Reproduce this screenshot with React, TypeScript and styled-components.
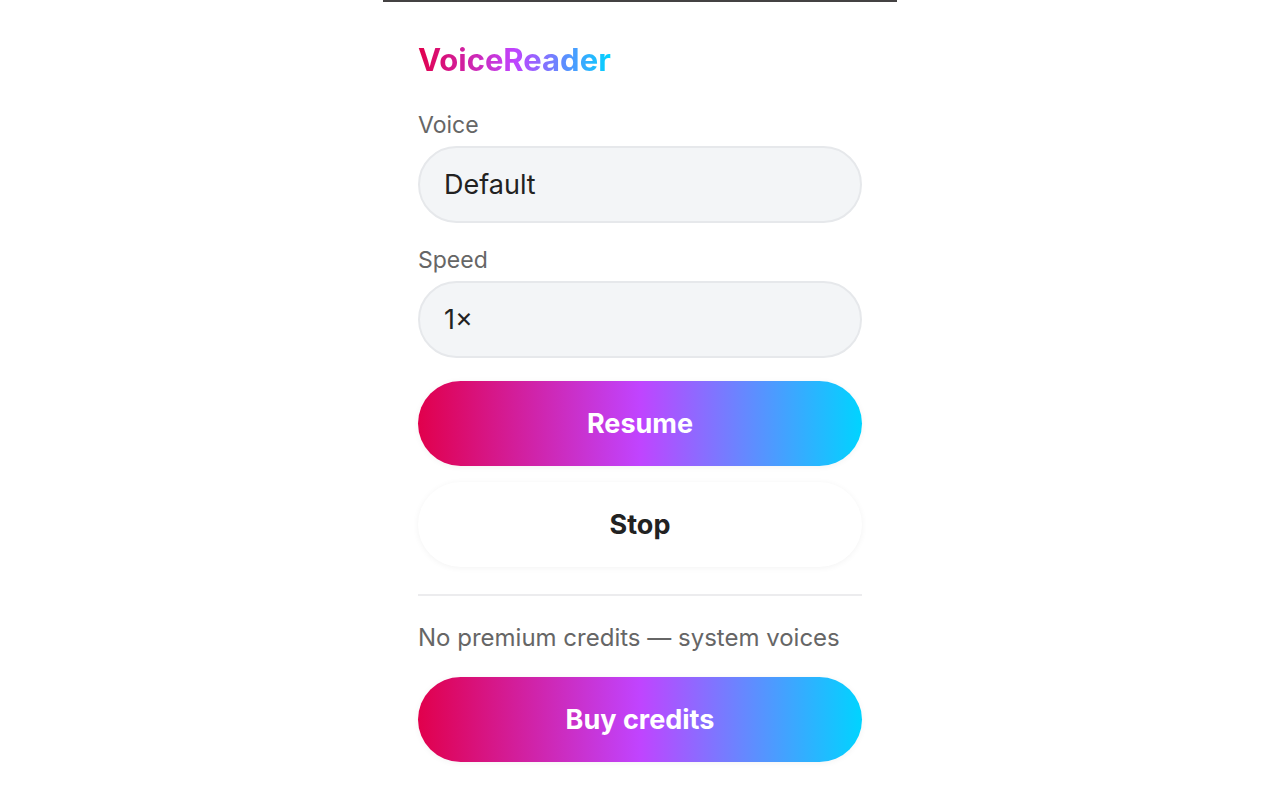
import React from "react";
import styled, { createGlobalStyle } from "styled-components";

const brandGradient = "linear-gradient(90deg, #e1004c 0%, #c044ff 50%, #00d4ff 100%)";

const GlobalStyle = createGlobalStyle`
  * { box-sizing: border-box; }
  body {
    margin: 0;
    background: #fff;
    color: #222;
    font-family: Inter, "Liberation Sans", sans-serif;
  }
`;

const Popup = styled.main`
  width: 100%;
  max-width: 514px;
  margin: 0 auto;
  padding: 39px 35px 38px;
  border-top: 2px solid #444243;
`;

const Title = styled.h1`
  width: fit-content;
  margin: 0 0 31px;
  font-size: 31px;
  line-height: 38px;
  font-weight: 700;
  background: ${brandGradient};
  background-clip: text;
  color: transparent;
`;

const Fields = styled.div`
  display: flex;
  flex-direction: column;
  gap: 22px;
`;

const Field = styled.div`
  display: flex;
  flex-direction: column;
  gap: 6px;
`;

const Label = styled.label`
  font-size: 23px;
  line-height: 30px;
  color: #666;
`;

const Select = styled.select`
  appearance: none;
  width: 100%;
  height: 77px;
  padding: 0 24px;
  border: 2px solid #e6e8eb;
  border-radius: 39px;
  background: #f3f5f7;
  color: #222;
  font: 400 27px/32px Inter, "Liberation Sans", sans-serif;
`;

const Button = styled.button<{ $plain?: boolean }>`
  display: block;
  width: 100%;
  height: 85px;
  border: 0;
  border-radius: 43px;
  background: ${(p) => (p.$plain ? "#fff" : brandGradient)};
  color: ${(p) => (p.$plain ? "#222" : "#fff")};
  box-shadow: 0 1px 6px rgba(0, 0, 0, 0.05);
  font: 700 27px/32px Inter, "Liberation Sans", sans-serif;
  cursor: pointer;
`;

const Actions = styled.div`
  display: flex;
  flex-direction: column;
  gap: 16px;
  margin-top: 23px;
`;

const Credits = styled.section`
  margin-top: 27px;
  padding-top: 27px;
  border-top: 2px solid #ececee;
`;

const Status = styled.p`
  margin: 0 0 24px;
  font-size: 24px;
  line-height: 30px;
  color: #666;
`;

export default function App() {
  return (
    <>
      <GlobalStyle />
      <Popup>
        <Title>VoiceReader</Title>
        <Fields>
          <Field>
            <Label htmlFor="voice">Voice</Label>
            <Select id="voice">
              <option>Default</option>
            </Select>
          </Field>
          <Field>
            <Label htmlFor="speed">Speed</Label>
            <Select id="speed">
              <option>1×</option>
            </Select>
          </Field>
        </Fields>
        <Actions>
          <Button type="button">Resume</Button>
          <Button type="button" $plain>Stop</Button>
        </Actions>
        <Credits>
          <Status>No premium credits — system voices</Status>
          <Button type="button">Buy credits</Button>
        </Credits>
      </Popup>
    </>
  );
}
